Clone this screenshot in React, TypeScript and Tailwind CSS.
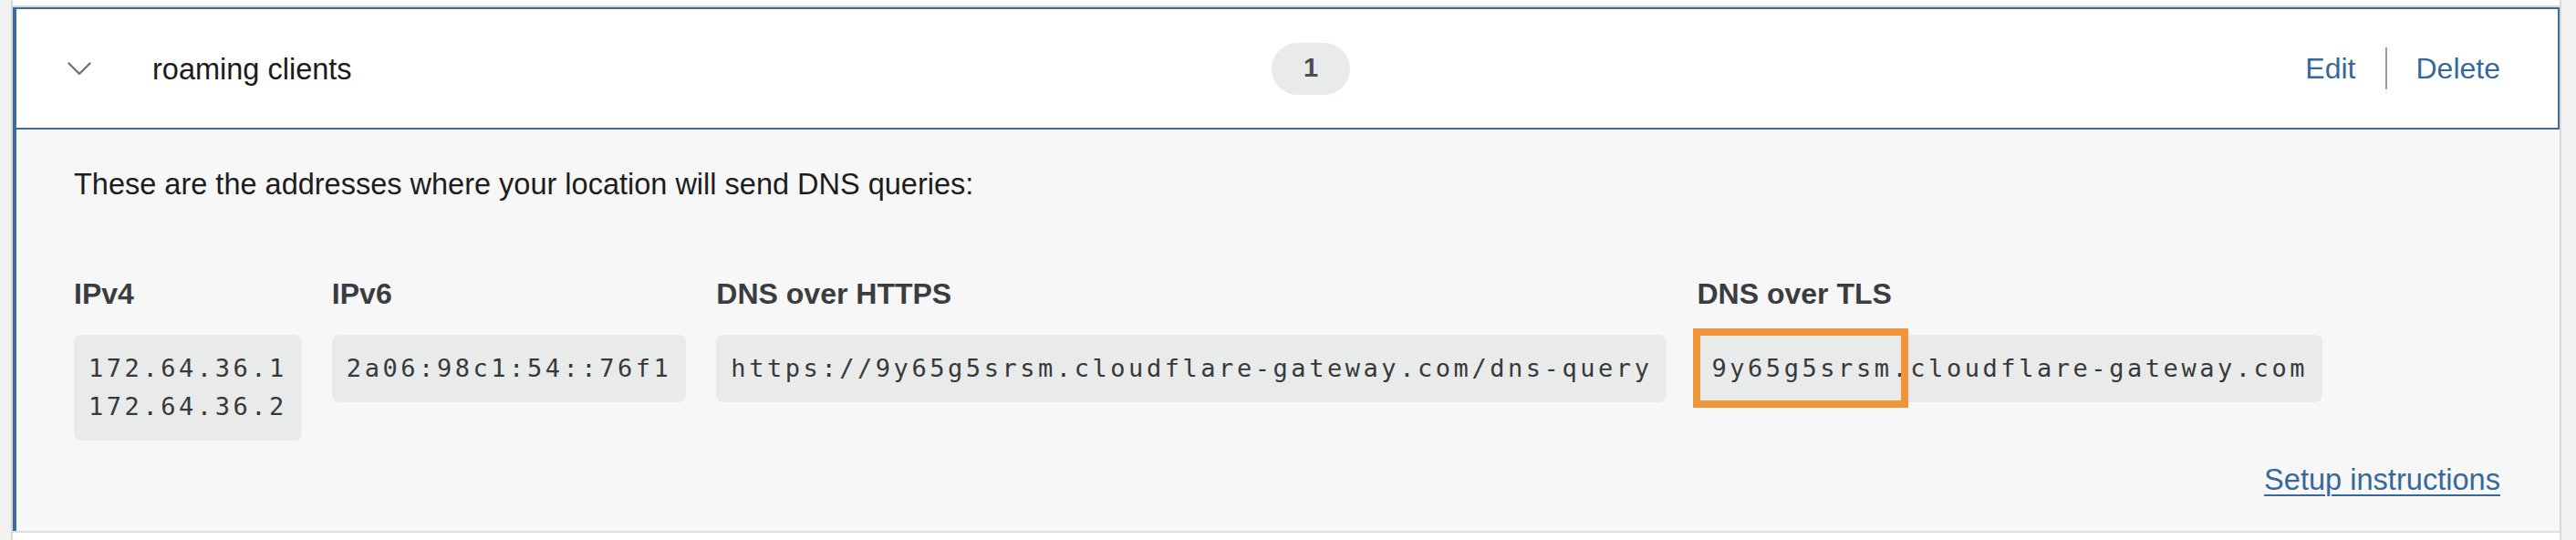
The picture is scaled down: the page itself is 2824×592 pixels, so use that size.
import React from "react";

const sans = { fontFamily: '"Liberation Sans", Arial, sans-serif' };
const mono = { fontFamily: '"DejaVu Sans Mono", "Liberation Mono", monospace' };

function AddrBox({ lines }: { lines: string[] }) {
  return (
    <div
      className="rounded-lg bg-[#e9eaea] px-4 py-4 text-[27px] leading-[42px] tracking-[3.55px] text-[#36393b] whitespace-nowrap"
      style={mono}
    >
      {lines.map((l) => (
        <div key={l}>{l}</div>
      ))}
    </div>
  );
}

function Column({ title, children }: { title: string; children: React.ReactNode }) {
  return (
    <div className="flex flex-col items-start">
      <div className="text-[32px] leading-[40px] font-bold text-[#3a3d40]">{title}</div>
      <div className="mt-[25px]">{children}</div>
    </div>
  );
}

export default function App() {
  return (
    <div className="flex h-[592px] w-[2824px] overflow-hidden bg-[#f2f2f2]" style={sans}>
      <div className="w-[12px] shrink-0" />
      <div className="flex flex-1 flex-col border-x-2 border-[#d9d9d9] bg-white">
        <div className="h-[8px] shrink-0 border-b-2 border-[#d6d6d6]" />
        <div className="flex flex-col border-l-4 border-[#3b6b96]">
          {/* header row */}
          <div className="flex h-[134px] items-center border-y-2 border-r-2 border-[#3b6b96] bg-white pr-[63px]">
            <div className="ml-[56px] flex w-[26px] shrink-0 justify-center">
              <svg width="26" height="15" viewBox="0 0 26 15" fill="none">
                <polyline points="1.5,1.5 13,13 24.5,1.5" stroke="#737373" strokeWidth="2.4" strokeLinecap="round" strokeLinejoin="round" />
              </svg>
            </div>
            <div className="ml-[67px] w-[1227px] shrink-0 pt-[2px] text-[32.5px] text-[#1b1b1b]">roaming clients</div>
            <div className="flex h-[57px] w-[86px] items-center justify-center rounded-full bg-[#e9eaea] text-[29px] font-bold text-[#4a4d51]">
              1
            </div>
            <div className="flex-1" />
            <div className="flex items-center text-[32px] text-[#36699b]">
              <span>Edit</span>
              <span className="mx-[32px] h-[46px] w-[2px] bg-[#9b9b9b]" />
              <span>Delete</span>
            </div>
          </div>

          {/* body */}
          <div className="flex h-[440px] flex-col bg-[#f7f7f7] pl-[63px] pr-[65px] pt-[40px]">
            <div className="text-[32.5px] leading-[40px] text-[#1d1d1d]">
              These are the addresses where your location will send DNS queries:
            </div>
            <div className="mt-[80px] flex items-start gap-[33px]">
              <Column title="IPv4">
                <AddrBox lines={["172.64.36.1", "172.64.36.2"]} />
              </Column>
              <Column title="IPv6">
                <AddrBox lines={["2a06:98c1:54::76f1"]} />
              </Column>
              <Column title="DNS over HTTPS">
                <AddrBox lines={["https://9y65g5srsm.cloudflare-gateway.com/dns-query"]} />
              </Column>
              <Column title="DNS over TLS">
                <div className="relative">
                  <AddrBox lines={["9y65g5srsm.cloudflare-gateway.com"]} />
                  <div className="absolute left-[-4px] top-[-7px] h-[87px] w-[236px] border-[8px] border-[#f0963a]" />
                </div>
              </Column>
            </div>
            <div className="mt-auto mb-[36px] flex justify-end">
              <span className="text-[32.6px] leading-[40px] text-[#36699b] underline decoration-2 underline-offset-[5px]">
                Setup instructions
              </span>
            </div>
          </div>
        </div>
        <div className="h-[2px] shrink-0 bg-[#dedede]" />
        <div className="flex-1 bg-white" />
      </div>
      <div className="w-[16px] shrink-0" />
    </div>
  );
}
